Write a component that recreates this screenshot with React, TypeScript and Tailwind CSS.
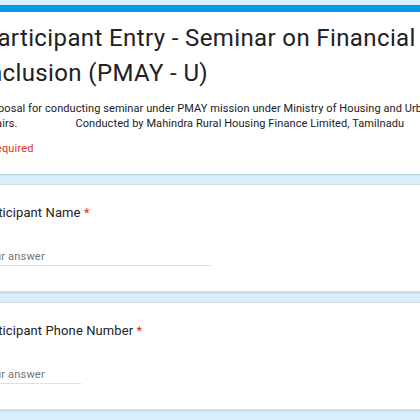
import React from "react";

function QuestionCard({ label, lineWidth }: { label: string; lineWidth: string }) {
  return (
    <div className="bg-white rounded-lg border border-[#dadce0] shadow-[0_1px_2px_rgba(60,64,67,0.15)] pl-[21px] pt-[18px] pb-[25px]">
      <div className="ml-[-4px] text-[13px] leading-[20px] tracking-[0.1px] text-[#202124]">
        {label} <span className="text-[#d93025]">*</span>
      </div>
      <div className={`mt-[26px] ${lineWidth} border-b border-[#e0e0e0] text-[11px] leading-[16px] tracking-[0.2px] text-[#70757a]`}>
        Your answer
      </div>
    </div>
  );
}

export default function App() {
  return (
    <div
      className="w-[420px] h-[420px] overflow-hidden bg-[#d9effc]"
      style={{ fontFamily: "Roboto, 'Noto Sans', sans-serif" }}
    >
      <div className="w-[680px] ml-[-40px] pt-[5px] flex flex-col gap-[10px]">
        {/* header card */}
        <div className="bg-white rounded-lg border-t-[7px] border-[#039be5] shadow-[0_1px_2px_rgba(60,64,67,0.2)] pl-[21px] pt-[9px] pb-[18px]">
          <div className="ml-[1px] w-[450px] text-[24px] leading-[35px] tracking-[0.38px] text-[#202124]">
            Participant Entry - Seminar on Financial Inclusion (PMAY - U)
          </div>
          <div className="mt-[10px] text-[11px] leading-[15px] tracking-[0.08px] text-[#202124] whitespace-nowrap">
            <div>Proposal for conducting seminar under PMAY mission under Ministry of Housing and Urban</div>
            <div>
              Affairs.<span className="inline-block w-[58px]" />Conducted by Mahindra Rural Housing Finance Limited, Tamilnadu
            </div>
          </div>
          <div className="mt-[10px] text-[11px] leading-[15px] tracking-[0.2px] text-[#d93025]">* Required</div>
        </div>
        <QuestionCard label="Participant Name" lineWidth="w-[229px]" />
        <QuestionCard label="Participant Phone Number" lineWidth="w-[99px]" />
      </div>
    </div>
  );
}
